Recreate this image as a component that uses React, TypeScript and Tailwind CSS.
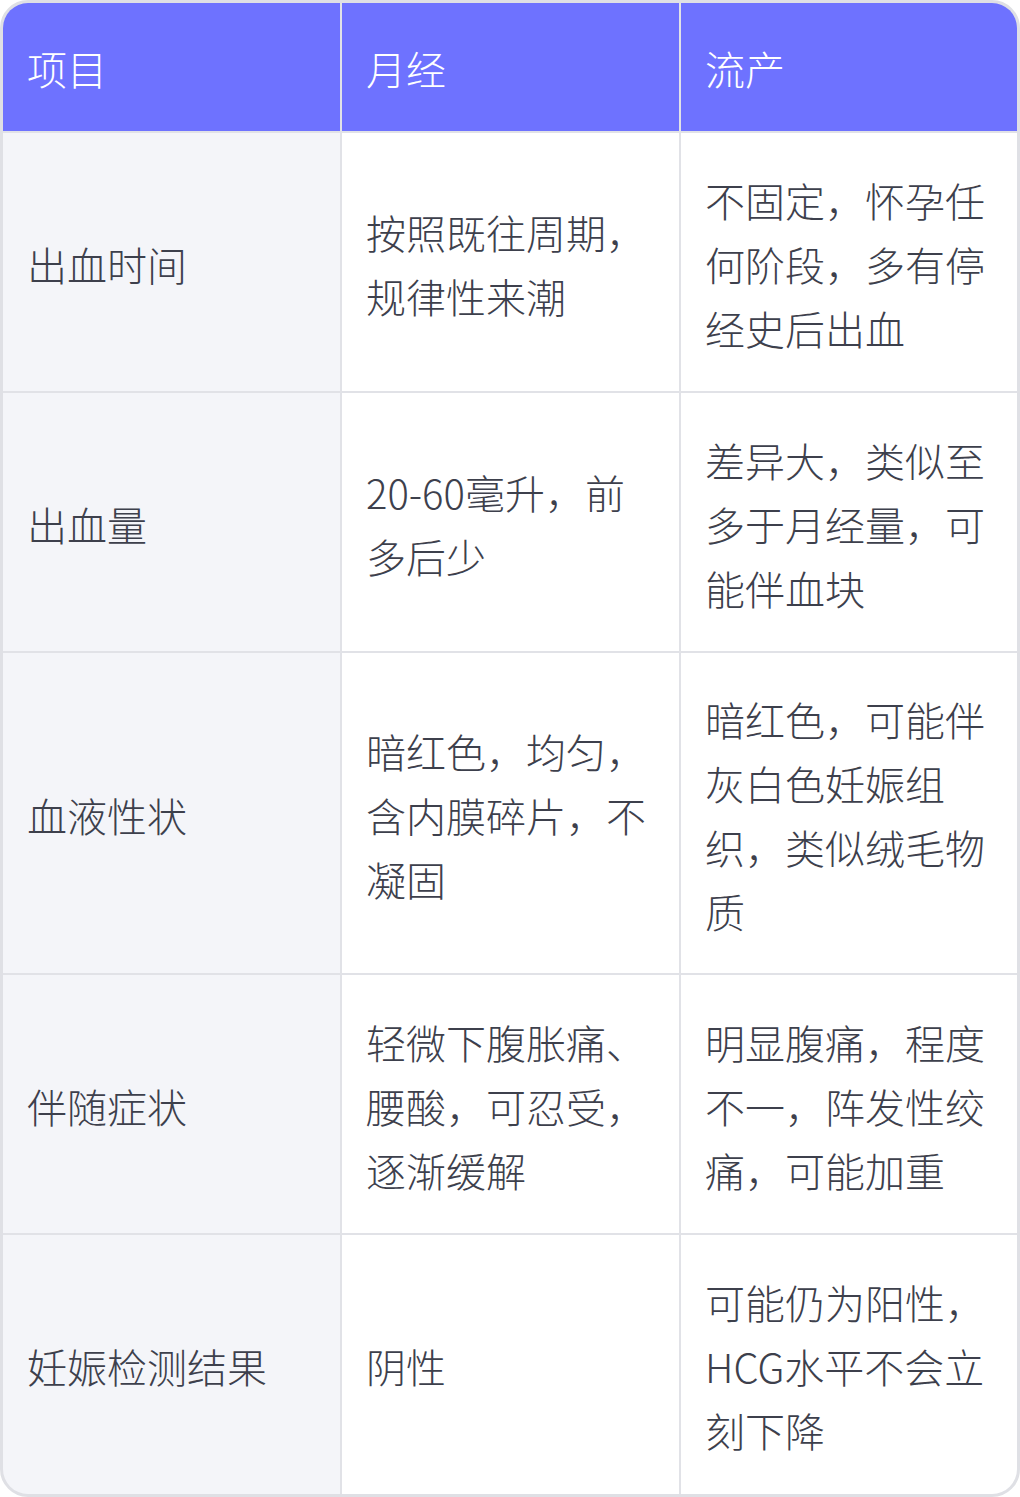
import React from "react";

/* ── 数据 ── */

const rows: [string, string, string][] = [
  ["出血时间", "按照既往周期，规律性来潮", "不固定，怀孕任何阶段，多有停经史后出血"],
  ["出血量", "20-60毫升，前多后少", "差异大，类似至多于月经量，可能伴血块"],
  ["血液性状", "暗红色，均匀，含内膜碎片，不凝固", "暗红色，可能伴灰白色妊娠组织，类似绒毛物质"],
  ["伴随症状", "轻微下腹胀痛、腰酸，可忍受，逐渐缓解", "明显腹痛，程度不一，阵发性绞痛，可能加重"],
  ["妊娠检测结果", "阴性", "可能仍为阳性，HCG水平不会立刻下降"],
];

const font = { fontFamily: '"Noto Sans CJK SC", "Noto Sans", sans-serif' };

export default function App() {
  return (
    <div className="h-[1497px] w-[1020px] bg-white" style={font}>
      <div className="grid h-full grid-cols-[337px_337px_1fr] grid-rows-[128px_258px_258px_320px_258px_1fr] gap-[2px] overflow-hidden rounded-[28px] border-[3px] border-[#dfe0e5] bg-[#e1e2e7]">
        {["项目", "月经", "流产"].map((h) => (
          <div
            key={h}
            className="flex items-center bg-[#6e72ff] px-6 pt-[2px] text-[40px] leading-[64px] font-extralight text-white"
          >
            {h}
          </div>
        ))}
        {rows.map((r) =>
          r.map((c, i) => (
            <div
              key={r[0] + i}
              className={`flex items-center px-6 pt-[3px] text-[40px] leading-[64px] font-extralight text-[#3d404c] ${
                i === 0 ? "bg-[#f4f5f9]" : "bg-white"
              }`}
            >
              <span>{c}</span>
            </div>
          )),
        )}
      </div>
    </div>
  );
}
